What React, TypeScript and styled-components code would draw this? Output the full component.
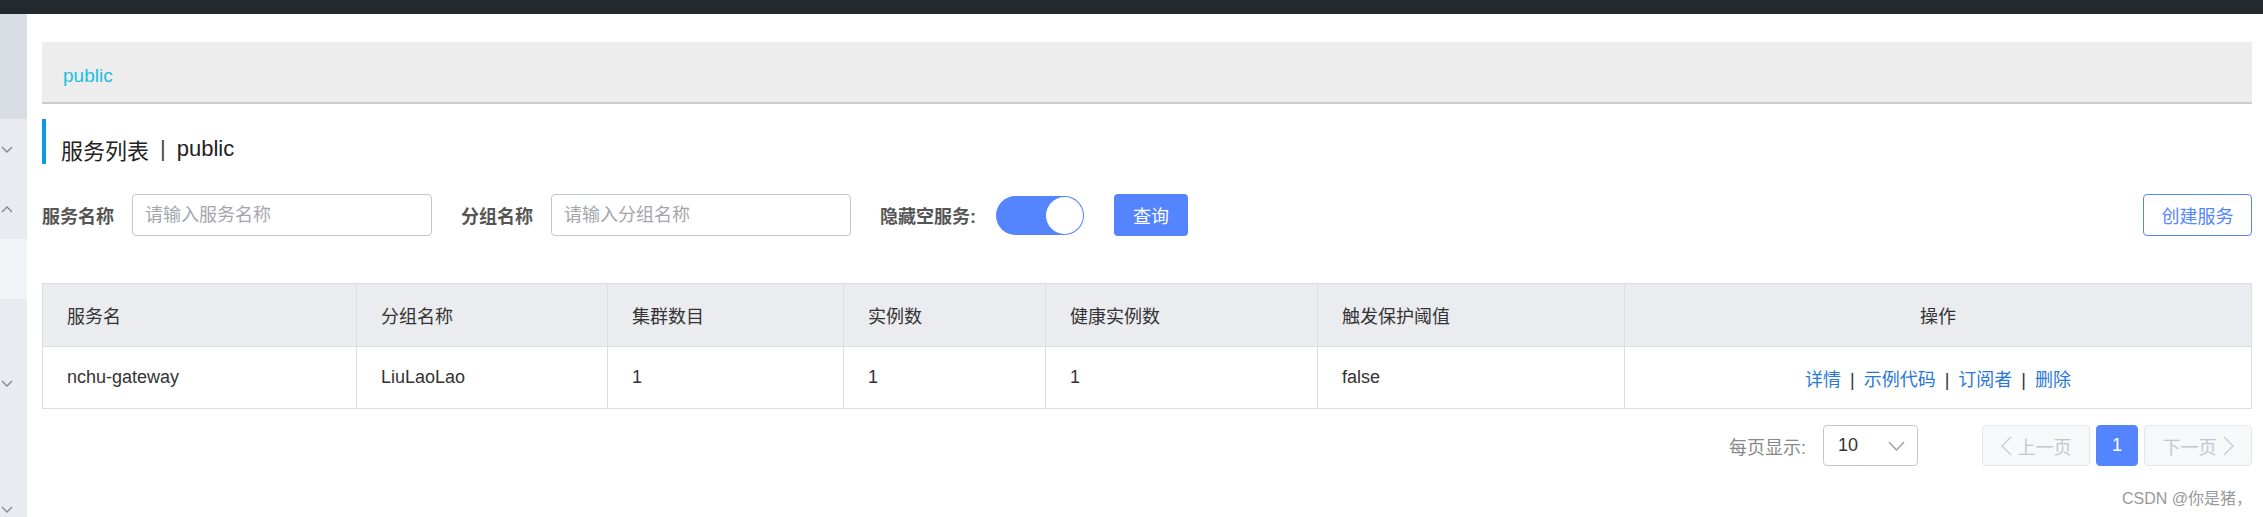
import styled, { createGlobalStyle } from "styled-components";

const GlobalStyle = createGlobalStyle`
  html, body {
    margin: 0;
    padding: 0;
    background: #fff;
  }
  body {
    font-family: "Liberation Sans", "Noto Sans CJK SC", sans-serif;
    color: #333;
  }
  * {
    box-sizing: border-box;
  }
`;

type MenuRow = { h: number; tone?: "dark" | "active"; icon?: "up" | "down" };

const menuRows: MenuRow[] = [
  { h: 105, tone: "dark" },
  { h: 60, icon: "down" },
  { h: 60, icon: "up" },
  { h: 60, tone: "active" },
  { h: 54 },
  { h: 60, icon: "down" },
  { h: 66 },
  { h: 60, icon: "down" },
];

const columns = [
  { title: "服务名", width: 314 },
  { title: "分组名称", width: 251 },
  { title: "集群数目", width: 236 },
  { title: "实例数", width: 202 },
  { title: "健康实例数", width: 272 },
  { title: "触发保护阈值", width: 307 },
  { title: "操作", width: 627, center: true },
];

const rows = [
  {
    name: "nchu-gateway",
    group: "LiuLaoLao",
    clusters: 1,
    instances: 1,
    healthy: 1,
    threshold: "false",
  },
];

const actions = ["详情", "示例代码", "订阅者", "删除"];

const Chevron = ({ dir = "down", color = "#7d8594", w = 12, h = 7 }: { dir?: "up" | "down" | "left" | "right"; color?: string; w?: number; h?: number }) => {
  const pts = {
    down: `1,1 ${w / 2},${h - 1} ${w - 1},1`,
    up: `1,${h - 1} ${w / 2},1 ${w - 1},${h - 1}`,
    left: `${w - 1},1 1,${h / 2} ${w - 1},${h - 1}`,
    right: `1,1 ${w - 1},${h / 2} 1,${h - 1}`,
  }[dir];
  return (
    <svg width={w} height={h} viewBox={`0 0 ${w} ${h}`}>
      <polyline points={pts} fill="none" stroke={color} strokeWidth={1.3} />
    </svg>
  );
};

const App = () => {
  return (
    <>
      <GlobalStyle />
      <Page>
        <TopBar />
        <Body>
          <Sidebar>
            {menuRows.map((row, i) => (
              <MenuItem key={i} $h={row.h} $tone={row.tone}>
                {row.icon && <Chevron dir={row.icon} />}
              </MenuItem>
            ))}
          </Sidebar>
          <Main>
            <Breadcrumb>
              <BreadcrumbLink>public</BreadcrumbLink>
            </Breadcrumb>
            <PageTitle>
              服务列表<TitleSep>|</TitleSep>public
            </PageTitle>
            <FilterRow>
              <FieldLabel>服务名称</FieldLabel>
              <TextInput placeholder="请输入服务名称" />
              <FieldLabel>分组名称</FieldLabel>
              <TextInput placeholder="请输入分组名称" />
              <FieldLabel>隐藏空服务:</FieldLabel>
              <Switch>
                <Knob />
              </Switch>
              <PrimaryButton>查询</PrimaryButton>
              <OutlineButton>创建服务</OutlineButton>
            </FilterRow>
            <Table>
              <colgroup>
                {columns.map((c) => (
                  <col key={c.title} style={{ width: c.width }} />
                ))}
              </colgroup>
              <thead>
                <tr>
                  {columns.map((c) => (
                    <Th key={c.title} $center={c.center}>
                      {c.title}
                    </Th>
                  ))}
                </tr>
              </thead>
              <tbody>
                {rows.map((r) => (
                  <tr key={r.name}>
                    <Td>{r.name}</Td>
                    <Td>{r.group}</Td>
                    <Td>{r.clusters}</Td>
                    <Td>{r.instances}</Td>
                    <Td>{r.healthy}</Td>
                    <Td>{r.threshold}</Td>
                    <Td $center>
                      {actions.map((a, i) => (
                        <span key={a}>
                          {i > 0 && <ActionSep>|</ActionSep>}
                          <ActionLink>{a}</ActionLink>
                        </span>
                      ))}
                    </Td>
                  </tr>
                ))}
              </tbody>
            </Table>
            <Pager>
              <SizeLabel>每页显示:</SizeLabel>
              <SizeSelect>
                <span>10</span>
                <Chevron dir="down" color="#9a9ca3" w={17} h={10} />
              </SizeSelect>
              <PageButton $disabled>
                <Chevron dir="left" color="#c8cad1" w={11} h={20} />
                上一页
              </PageButton>
              <PageButton $active>1</PageButton>
              <PageButton $disabled>
                下一页
                <Chevron dir="right" color="#c8cad1" w={11} h={20} />
              </PageButton>
            </Pager>
          </Main>
          <Watermark>CSDN @你是猪，</Watermark>
        </Body>
      </Page>
    </>
  );
};

const Page = styled.div`
  width: 2263px;
  height: 517px;
  overflow: hidden;
  display: flex;
  flex-direction: column;
`;

const TopBar = styled.div`
  height: 14px;
  flex-shrink: 0;
  background: #24292e;
`;

const Body = styled.div`
  flex: 1;
  display: flex;
  position: relative;
  overflow: hidden;
`;

const Sidebar = styled.div`
  width: 27px;
  flex-shrink: 0;
  display: flex;
  flex-direction: column;
  background: #e9ebf0;
`;

const MenuItem = styled.div<{ $h: number; $tone?: "dark" | "active" }>`
  height: ${(p) => p.$h}px;
  flex-shrink: 0;
  display: flex;
  align-items: center;
  padding-left: 1px;
  background: ${(p) =>
    p.$tone === "dark" ? "#d9dde4" : p.$tone === "active" ? "#f2f3f6" : "#e9ebf0"};
`;

const Main = styled.div`
  flex: 1;
  padding: 28px 11px 0 15px;
`;

const Breadcrumb = styled.div`
  height: 62px;
  display: flex;
  align-items: center;
  padding: 7px 0 0 21px;
  background: #ededed;
  border-bottom: 2px solid #cbcbcb;
`;

const BreadcrumbLink = styled.span`
  font-size: 19px;
  color: #1cbfe0;
`;

const PageTitle = styled.div`
  margin-top: 15px;
  height: 45px;
  display: flex;
  align-items: center;
  padding: 14px 0 0 15px;
  border-left: 4px solid #0e9bd6;
  font-size: 22px;
  color: #222;
`;

const TitleSep = styled.span`
  margin: 0 11px;
  color: #444;
`;

const FilterRow = styled.div`
  margin-top: 30px;
  height: 42px;
  display: flex;
  align-items: center;
`;

const FieldLabel = styled.label`
  font-size: 18px;
  font-weight: 700;
  color: #555;
  margin-right: 18px;
  white-space: nowrap;
`;

const TextInput = styled.input`
  width: 300px;
  height: 42px;
  margin-right: 29px;
  padding: 0 12px;
  border: 1px solid #c4c6cf;
  border-radius: 4px;
  font-family: inherit;
  font-size: 18px;
  color: #333;
  outline: none;
  &::placeholder {
    color: #a4a6ad;
  }
`;

const Switch = styled.div`
  width: 88px;
  height: 39px;
  padding: 1px;
  margin-left: 2px;
  margin-right: 30px;
  display: flex;
  justify-content: flex-end;
  border-radius: 20px;
  background: #5584ff;
`;

const Knob = styled.div`
  width: 37px;
  height: 37px;
  border-radius: 50%;
  background: #fff;
`;

const PrimaryButton = styled.button`
  width: 74px;
  height: 42px;
  border: none;
  border-radius: 4px;
  background: #5584ff;
  color: #fff;
  font-family: inherit;
  font-size: 18px;
`;

const OutlineButton = styled.button`
  margin-left: auto;
  width: 109px;
  height: 42px;
  border: 1px solid #5584ff;
  border-radius: 4px;
  background: #fff;
  color: #5584ff;
  font-family: inherit;
  font-size: 18px;
`;

const Table = styled.table`
  margin-top: 47px;
  width: 2210px;
  table-layout: fixed;
  border-collapse: collapse;
  font-size: 18px;
  color: #333;
`;

const Th = styled.th<{ $center?: boolean }>`
  height: 63px;
  padding: 0 24px;
  border: 1px solid #dcdee3;
  background: #ebecf0;
  font-weight: 400;
  text-align: ${(p) => (p.$center ? "center" : "left")};
`;

const Td = styled.td<{ $center?: boolean }>`
  height: 62px;
  padding: 0 24px;
  border: 1px solid #dcdee3;
  text-align: ${(p) => (p.$center ? "center" : "left")};
`;

const ActionLink = styled.a`
  color: #2a77dc;
  cursor: pointer;
`;

const ActionSep = styled.span`
  margin: 0 9px;
  color: #333;
`;

const Pager = styled.div`
  margin-top: 16px;
  display: flex;
  justify-content: flex-end;
  align-items: center;
`;

const SizeLabel = styled.span`
  font-size: 18px;
  color: #888;
  margin-right: 17px;
`;

const SizeSelect = styled.div`
  width: 95px;
  height: 41px;
  margin-right: 58px;
  padding: 0 12px 0 14px;
  display: flex;
  align-items: center;
  justify-content: space-between;
  border: 1px solid #c4c6cf;
  border-radius: 4px;
  font-size: 18px;
  color: #333;
`;

const PageButton = styled.div<{ $active?: boolean; $disabled?: boolean }>`
  height: 41px;
  width: ${(p) => (p.$active ? 42 : 108)}px;
  margin-left: 6px;
  display: flex;
  align-items: center;
  justify-content: center;
  gap: 6px;
  border-radius: 4px;
  font-size: 18px;
  border: 1px solid ${(p) => (p.$active ? "#5584ff" : "#e6e7eb")};
  background: ${(p) => (p.$active ? "#5584ff" : "#f7f8fa")};
  color: ${(p) => (p.$active ? "#fff" : p.$disabled ? "#c4c6cf" : "#333")};
`;

const Watermark = styled.div`
  position: absolute;
  right: 11px;
  bottom: 8px;
  font-size: 16px;
  color: #999;
  pointer-events: none;
`;

export default App;
